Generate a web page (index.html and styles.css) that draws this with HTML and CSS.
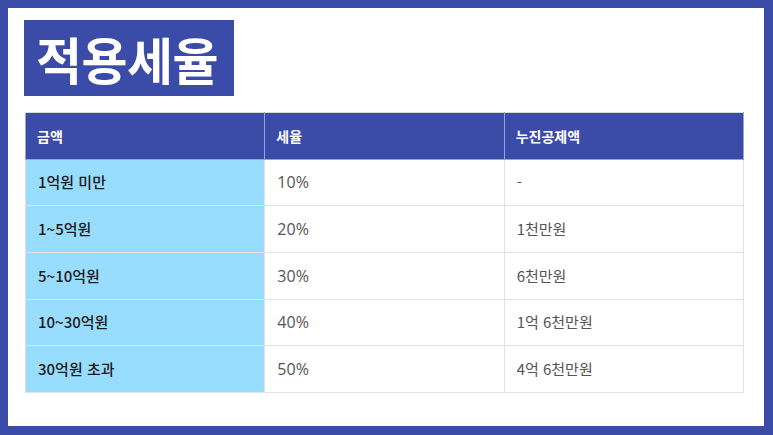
FILE: index.html
```html
<!DOCTYPE html>
<html lang="ko">
<head>
<meta charset="utf-8">
<link rel="stylesheet" href="styles.css">
</head>
<body>
<div class="frame">
  <h1 class="title">적용세율</h1>
  <table class="rates">
    <thead>
      <tr><th>금액</th><th>세율</th><th>누진공제액</th></tr>
    </thead>
    <tbody>
      <tr><td class="amt">1억원 미만</td><td class="pct">10%</td><td>-</td></tr>
      <tr><td class="amt">1~5억원</td><td class="pct">20%</td><td>1천만원</td></tr>
      <tr><td class="amt">5~10억원</td><td class="pct">30%</td><td>6천만원</td></tr>
      <tr><td class="amt">10~30억원</td><td class="pct">40%</td><td>1억 6천만원</td></tr>
      <tr><td class="amt">30억원 초과</td><td class="pct">50%</td><td>4억 6천만원</td></tr>
    </tbody>
  </table>
</div>
</body>
</html>
```

FILE: styles.css
```css
html, body {
  margin: 0;
  padding: 0;
  background: #3a4ba8;
}
.frame {
  box-sizing: border-box;
  width: 773px;
  height: 435px;
  border-style: solid;
  border-color: #3a4ba8;
  border-width: 8px 9px 9px 8px;
  background: #fff;
  padding: 12px 20px 0 16px;
  font-family: "Noto Sans CJK KR", "Noto Sans", sans-serif;
}
.title {
  display: inline-block;
  margin: 0;
  box-sizing: border-box;
  height: 76px;
  width: 210px;
  padding: 0 0 0 12px;
  background: #3a4ba8;
  color: #fff;
  font-size: 50px;
  font-weight: 700;
  line-height: 76px;
  letter-spacing: -0.5px;
}
.rates {
  display: table;
  margin: 16px 0 0 1px;
  width: 719px;
  border-collapse: collapse;
  table-layout: fixed;
  font-size: 15px;
  line-height: 20px;
  border: 1px solid #dcdcdc;
}
.rates th {
  height: 45.5px;
  padding: 0 0 0 11px;
  background: #3a4ba8;
  color: #fff;
  font-size: 14px;
  font-weight: 700;
  text-align: left;
  border: 1px solid #9aa3d6;
  border-top-color: #dcdcdc;
}
.rates td {
  height: 45.7px;
  padding: 0 0 0 12px;
  color: #555;
  border: 1px solid #e2e2e2;
  font-family: "Noto Sans CJK KR", sans-serif;
}
.rates td.pct {
  font-size: 16px;
  font-family: "Open Sans", sans-serif;
}
.rates td.amt {
  background: #99ddfe;
  color: #1a1a1a;
  font-weight: 500;
  border-left-color: #dcdcdc;
}
```
